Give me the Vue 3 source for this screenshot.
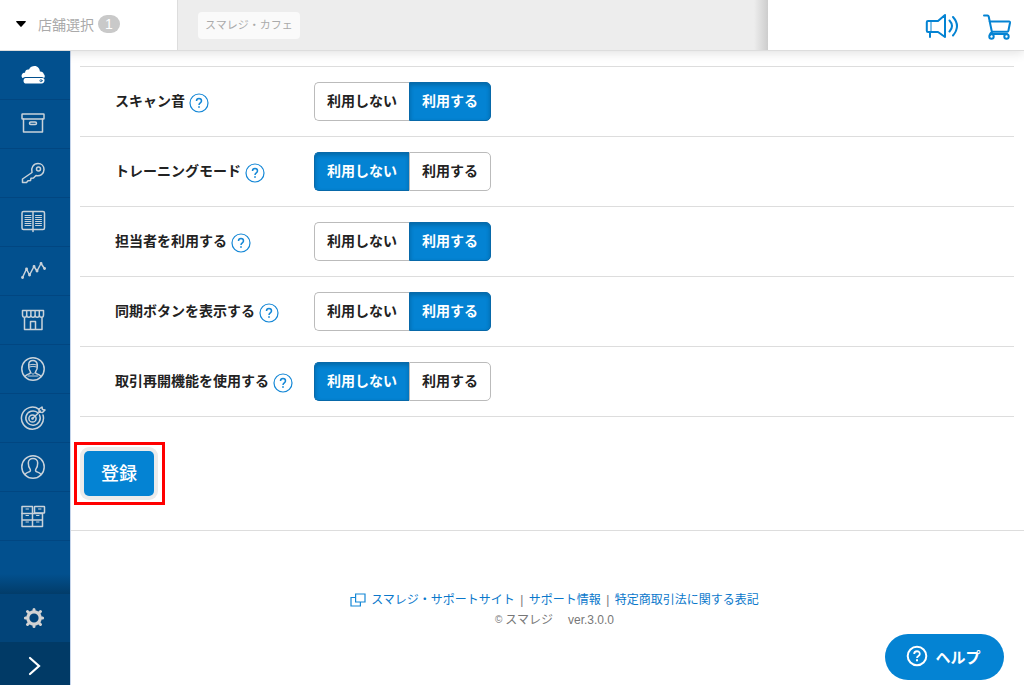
<script setup>
import { reactive } from 'vue'

const navItems = [
  { id: 'cloud', label: 'ホーム' },
  { id: 'box', label: '商品' },
  { id: 'key', label: '権限' },
  { id: 'book', label: '取引' },
  { id: 'chart', label: '売上分析' },
  { id: 'store', label: '店舗' },
  { id: 'staff', label: 'スタッフ' },
  { id: 'target', label: '販促' },
  { id: 'member', label: '会員' },
  { id: 'stock', label: '在庫' }
]

const settings = reactive([
  { id: 'scan', label: 'スキャン音', enabled: true },
  { id: 'training', label: 'トレーニングモード', enabled: false },
  { id: 'clerk', label: '担当者を利用する', enabled: true },
  { id: 'sync', label: '同期ボタンを表示する', enabled: true },
  { id: 'resume', label: '取引再開機能を使用する', enabled: false }
])
</script>

<template>
  <div class="app">
    <header class="topbar">
      <button class="store-select" type="button">
        <svg class="caret" width="10" height="6" viewBox="0 0 10 6"><path d="M.8 0h8.400c.7 0 .9.600.5 1L5.600 5.600c-.3.400-.9.400-1.200 0L.3 1C-.1.600.1 0 .8 0z" fill="#000" /></svg>
        <span>店舗選択</span>
        <span class="count">1</span>
      </button>
      <div class="store-strip"><span class="store-tag">スマレジ・カフェ</span></div>
      <div class="tools">
        <a href="#news" aria-label="お知らせ">
          <svg width="34" height="28" viewBox="0 0 34 28" fill="none" stroke="#0483d3" stroke-width="2" stroke-linejoin="round" stroke-linecap="round">
            <path d="M3 8h10L20 2v22l-7-5H3a1.200 1.200 0 0 1-1.200-1.200V9.200A1.200 1.200 0 0 1 3 8zM5 19v5" />
            <path d="M6 8v11" stroke-width="1" />
            <path d="M24.500 7.500q5 5.500 0 11M28 4q8 9 0 18.500" />
          </svg>
        </a>
        <a href="#cart" aria-label="カート">
          <svg width="30" height="28" viewBox="0 0 30 28" fill="none" stroke="#0483d3" stroke-width="2" stroke-linejoin="round" stroke-linecap="round">
            <path d="M2 2.500h3.500q1 0 1.200 1L10 19.500M7.500 8.500h19.500q1.200 0 1 1.200l-1.600 8q-.2 1-1.200 1H10M10 19.500q-1.500 0-2 2.500M10 21h15" />
            <circle cx="9.500" cy="23.500" r="2.200" /><circle cx="24.500" cy="23.500" r="2.200" />
          </svg>
        </a>
      </div>
    </header>

    <nav class="sidebar" aria-label="メインメニュー">
      <a v-for="item in navItems" :key="item.id" class="nav-item" :href="'#' + item.id" :aria-label="item.label">
        <svg class="nav-icon" viewBox="0 0 26 26">
          <g v-if="item.id === 'cloud'" fill="#fff">
            <path d="M4 16.500C1.500 16.500.800 13.200 2.600 11.500 3.500 10.700 4.500 10.700 5 10.700 5 8.300 7.200 7 9 7.600 10 4.800 12.500 4 14.500 4c3.200 0 5.400 2.500 5.400 5.600 1.800-.2 3.600.800 3.900 2.600 1.800 1.500.9 4.300-.8 4.300z" />
            <rect x="2.500" y="15" width="22" height="7" rx="3" fill="#02508e" />
            <path d="M5.500 16h16.800c1.400 0 2.200.800 2.200 2 0 2-1 3.600-3 3.600h-15c-2 0-3-1-3-2.600 0-1.600.800-3 2-3z" />
            <circle cx="21" cy="18.700" r="1.100" fill="none" stroke="#02508e" stroke-width=".8" />
          </g>
          <g v-else-if="item.id === 'box'">
            <rect x="2" y="3" width="22" height="5" rx=".5" /><path d="M3.500 8v13h19V8" /><rect x="9.500" y="11" width="7" height="2.500" rx="1.200" />
          </g>
          <g v-else-if="item.id === 'key'">
            <path d="M12 12.500c-1.500-4.500 1.500-9 6-9 3.500 0 6 2.500 6 6 0 4.500-4 7-8 6l-2.500 2.500-2.500.2-.5 2.300-2.500.2-1.500 1.800H2.500V19z" /><circle cx="18.500" cy="9" r="2" />
          </g>
          <g v-else-if="item.id === 'book'">
            <rect x="2" y="2.500" width="22.500" height="18" rx="1.500" /><path d="M13 3v19.500" />
            <path stroke-width="1" d="M5 6.500h6M5 8.500h6M5 10.500h6M5 12.500h6M5 14.500h6M5 16.500h6M15.500 6.500h6M15.500 8.500h6M15.500 10.500h6M15.500 12.500h6M15.500 14.500h6M15.500 16.500h6" />
          </g>
          <g v-else-if="item.id === 'chart'">
            <path d="M2.500 19.500 6.500 11l3 6L14 8.500l3 4.500 4-7.500 3.500 5" /><path stroke-width="2.800" d="M2.500 19.500h.1M6.500 11h.1M9.500 17h.1M14 8.500h.1M17 13h.1M21 5.500h.1M24.500 10.500h.1" />
          </g>
          <g v-else-if="item.id === 'store'">
            <path d="M2.500 3.500h21v4.500c0 3-4 3-4.200 0 0 3-4.200 3-4.200 0 0 3-4.200 3-4.200 0 0 3-4.200 3-4.200 0 0 3-4.200 3-4.200 0zM6.700 4v4M10.900 4v4M15.100 4v4M19.300 4v4M4.500 10.500V22.500h17.500V10.500M10.500 22V14.500h5V22" />
          </g>
          <g v-else-if="item.id === 'staff'">
            <circle cx="13" cy="13" r="11.200" />
            <path d="M5 20.500c1.200-2 3-2.300 4.500-2.800 1.200-.4 1-1.800.7-2.500-2-2.200-1.500-5-1.500-6.200 0-6 8.600-6 8.600 0 0 1.200.5 4-1.500 6.200-.3.700-.5 2.100.7 2.500 1.500.5 3.300.800 4.500 2.800" />
            <path stroke-width="1" d="M8.800 9q4.200-1.500 8.400 0M9 11q4-1.500 8 0M8 20h10M11 16.500l2 2 2-2" />
          </g>
          <g v-else-if="item.id === 'target'">
            <path d="M19 4.300A11 11 0 1 0 23 10" /><path d="M17.500 7.500a7.200 7.200 0 1 0 2 2.500" /><circle cx="12.500" cy="13.500" r="3.600" />
            <path d="M12.500 13.500 20.500 6M19 7V4l3-2 .5 2.500 2.500.5-2.500 2.500z" /><circle cx="12.500" cy="13.500" r=".6" />
          </g>
          <g v-else-if="item.id === 'member'">
            <circle cx="13" cy="13" r="11.200" />
            <path d="M5 20.500c1.200-2 3-2.300 4.500-2.800 1.200-.4 1-1.800.7-2.500-1.700-1.700-1.900-4-1.900-6.200C8.300 3 17.700 3 17.700 9c0 2.200-.2 4.500-1.900 6.200-.3.700-.5 2.100.7 2.500 1.500.5 3.300.800 4.500 2.800" />
          </g>
          <g v-else>
            <rect x="2" y="3.500" width="10.500" height="7" /><rect x="14.500" y="3.500" width="10" height="6.500" rx=".5" />
            <path d="M2 10.500V23.500h20.500V10.500M2 17h20.500M12.500 10.500V23.500M12.500 10.500h10" />
            <path stroke-width="1" d="M6 6h2.500M18.500 6H21M6 12.500h2.500M16.500 12.500H19M6 19h2.500M16.500 19H19" />
          </g>
        </svg>
      </a>
      <div class="nav-fill"></div>
      <a class="nav-settings" href="#settings" aria-label="設定">
        <svg width="22" height="22" viewBox="-11 -11 22 22" stroke="#d3d3d3" fill="none">
          <circle r="6.200" stroke-width="3.200" />
          <path d="M0-7v-1.600M0 7v1.600M-7 0h-1.600M7 0h1.600M-5-5l-1.500-1.500M5-5l1.500-1.500M-5 5l-1.500 1.500M5 5l1.500 1.500" stroke-width="3" stroke-linecap="round" />
        </svg>
      </a>
      <button class="nav-expand" type="button" aria-label="メニューを開く">
        <svg width="14" height="20" viewBox="0 0 14 20"><path d="M3 2l9 8-9 8" fill="none" stroke="#fff" stroke-width="2.200" stroke-linecap="round" /></svg>
      </button>
    </nav>

    <div class="page">
      <main class="content">
        <div class="rows">
          <div v-for="row in settings" :key="row.id" class="row">
            <div class="row-label">
              <span :id="row.id + '-label'" class="row-name">{{ row.label }}</span>
              <button class="hint" type="button" :aria-label="row.label + 'の説明'">
                <svg width="20" height="20" viewBox="0 0 20 20" fill="none" stroke="#1487d6">
                  <circle cx="10" cy="10" r="9" stroke-width="1.200" />
                  <path d="M7.500 8c0-3.300 5-3.300 5 0 0 1.900-2.500 1.900-2.500 4" stroke-width="1.500" /><path d="M10 13.200v1.600" stroke-width="1.700" />
                </svg>
              </button>
            </div>
            <div class="toggle" role="group" :aria-labelledby="row.id + '-label'">
              <button type="button" :class="{ on: !row.enabled }" :aria-pressed="!row.enabled" @click="row.enabled = false">利用しない</button>
              <button type="button" :class="{ on: row.enabled }" :aria-pressed="row.enabled" @click="row.enabled = true">利用する</button>
            </div>
          </div>
        </div>
        <div class="highlight"><button class="submit" type="button">登録</button></div>
      </main>

      <footer class="footer">
        <div class="links">
          <svg width="16" height="14" viewBox="0 0 16 14" fill="none" stroke="#1487d6" stroke-width="1.200"><path d="M5.600 1h9.400v8H5.600zM5.600 4.500H1V13h9.400V9" /></svg>
          <a href="#support-site">スマレジ・サポートサイト</a>
          <span class="bar">|</span>
          <a href="#support">サポート情報</a>
          <span class="bar">|</span>
          <a href="#law">特定商取引法に関する表記</a>
        </div>
        <div class="copy"><span class="mark">©</span><span>スマレジ</span><span class="version">ver.3.0.0</span></div>
      </footer>
    </div>

    <button class="help" type="button">
      <svg width="22" height="22" viewBox="0 0 22 22" fill="none" stroke="#fff">
        <circle cx="11" cy="11" r="9.300" stroke-width="2" />
        <path d="M8.200 9c0-3.700 5.600-3.700 5.600 0 0 2-2.800 2-2.800 4" stroke-width="1.800" /><path d="M11 14.300v2" stroke-width="2" />
      </svg>
      <span>ヘルプ</span>
    </button>
  </div>
</template>

<style>
body {
  margin: 0;
  background: #fff;
}
</style>

<style scoped>
.app {
  display: grid;
  grid-template: 51px 1fr / 70px 1fr;
  min-height: 100vh;
  font-family: "Liberation Sans", "Noto Sans CJK JP", sans-serif;
  color: #222;
}
button {
  margin: 0;
  padding: 0;
  border: 0;
  background: none;
  font: inherit;
  color: inherit;
  cursor: pointer;
}
svg {
  display: block;
  flex: none;
}
.topbar {
  grid-column: 1 / -1;
  position: sticky;
  top: 0;
  z-index: 2;
  display: flex;
  box-sizing: border-box;
  background: #fff;
  border-bottom: 1px solid #ddd;
  box-shadow: 0 2px 10px rgba(0, 0, 0, 0.12);
}
.store-select {
  display: flex;
  align-items: center;
  box-sizing: border-box;
  width: 178px;
  padding: 0 0 2px 16px;
  border-right: 1px solid #ddd;
  font-size: 14px;
  color: #aaa;
}
.caret {
  margin-right: 12px;
}
.count {
  width: 22px;
  margin-left: 4px;
  border-radius: 9px;
  background: #c9c9c9;
  color: #fff;
  line-height: 18px;
  text-align: center;
}
.store-strip {
  flex: 1;
  display: flex;
  align-items: center;
  padding-left: 20px;
  background: linear-gradient(to left, #cdcdcd, #ededed 14px);
}
.store-tag {
  padding: 0 7px;
  border-radius: 4px;
  background: #fafafa;
  color: #aaa;
  font-size: 11px;
  line-height: 27px;
}
.tools {
  width: 256px;
  display: flex;
  align-items: center;
  justify-content: flex-end;
  gap: 23px;
  box-sizing: border-box;
  padding: 3px 12px 0 0;
}
.sidebar {
  position: sticky;
  top: 51px;
  z-index: 3;
  display: flex;
  flex-direction: column;
  height: calc(100vh - 51px);
  background: #02508e;
}
.nav-item {
  display: flex;
  align-items: center;
  justify-content: center;
  box-sizing: border-box;
  height: 49px;
  padding-right: 4px;
  border-bottom: 1px solid #014681;
}
.nav-icon {
  width: 26px;
  height: 26px;
  fill: none;
  stroke: #c9d2da;
  stroke-width: 1.5;
  stroke-linejoin: round;
  stroke-linecap: round;
}
.nav-icon g[fill] {
  stroke: none;
}
.nav-fill {
  flex: 1;
  background: linear-gradient(to top, #023c69, #02508e 20px);
}
.nav-settings,
.nav-expand {
  display: flex;
  align-items: center;
  justify-content: center;
  padding-right: 2px;
}
.nav-settings {
  height: 48px;
  background: #024479;
}
.nav-expand {
  height: 43px;
  padding-top: 4px;
  box-sizing: border-box;
  background: #013a66;
}
.page {
  min-width: 0;
  border-left: 1px solid #c5d4ea;
}
.content {
  padding: 15px 10px 25px 9px;
  border-bottom: 1px solid #ddd;
}
.rows {
  border-top: 1px solid #ddd;
}
.row {
  display: flex;
  align-items: center;
  box-sizing: border-box;
  height: 70px;
  padding-left: 35px;
  border-bottom: 1px solid #ddd;
  font-size: 14px;
  font-weight: bold;
}
.row-label {
  display: flex;
  align-items: center;
  gap: 4px;
  width: 199px;
}
.row-name {
  padding-bottom: 4px;
}
.hint {
  padding-top: 2px;
}
.toggle {
  display: flex;
}
.toggle button {
  box-sizing: border-box;
  height: 39px;
  padding: 0 12px 4px;
  border: 1px solid #bbb;
  background: #fff;
}
.toggle button:first-child {
  border-right: 0;
  border-radius: 5px 0 0 5px;
}
.toggle button:last-child {
  border-radius: 0 5px 5px 0;
}
.toggle .on {
  background: #0483d3;
  border-color: #0869a9;
  box-shadow: inset 0 2px 4px rgba(0, 0, 0, 0.22);
  color: #fff;
}
.highlight {
  display: inline-block;
  margin: 25px 0 0 -6px;
  padding: 6px 8px 6px 7px;
  border: 3px solid #f00;
  vertical-align: top;
}
.submit {
  display: block;
  width: 70px;
  height: 45px;
  padding-bottom: 3px;
  border-radius: 5px;
  background: #0483d3;
  box-shadow: 0 0 0 4px #ebebeb;
  color: #fff;
  font-size: 18px;
  font-weight: 500;
}
.footer {
  padding-top: 59px;
  padding-right: 10px;
  font-size: 12px;
  line-height: 20px;
  color: #777;
}
.links,
.copy {
  display: flex;
  align-items: center;
  justify-content: center;
}
.links {
  padding-left: 24px;
}
.links svg {
  margin-right: 5px;
}
.links a {
  color: #0a78cb;
  text-decoration: none;
}
.bar {
  width: 14px;
  text-align: center;
}
.copy {
  padding-left: 24px;
}
.mark {
  margin-right: 3px;
  font-size: 10px;
}
.version {
  margin-left: 15px;
}
.help {
  position: fixed;
  right: 20px;
  bottom: 5px;
  z-index: 4;
  display: flex;
  align-items: center;
  justify-content: center;
  gap: 7px;
  width: 119px;
  height: 46px;
  padding: 0 2px 2px 0;
  border-radius: 23px;
  background: #0483d3;
  color: #fff;
  font-size: 15px;
  font-weight: bold;
}
</style>
